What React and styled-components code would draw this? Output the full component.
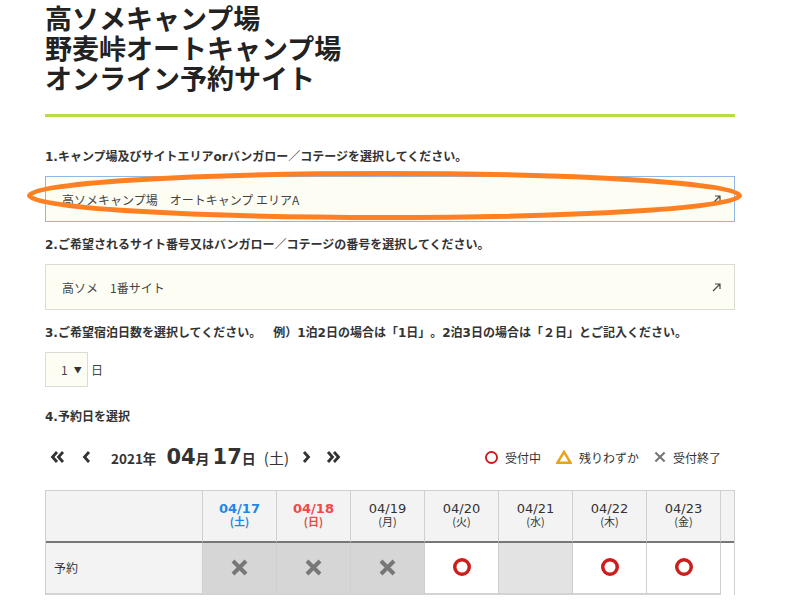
import React from 'react';
import styled, { createGlobalStyle } from 'styled-components';

const GlobalStyle = createGlobalStyle`
  body {
    margin: 0;
    background: #fff;
    color: #333;
    font-family: "DejaVu Sans", "Noto Sans CJK JP", sans-serif;
    text-spacing-trim: space-all;
  }
`;

const Page = styled.div`
  width: 690px;
  margin: 0 45px;
  padding-top: 3px;
`;

const Title = styled.h1`
  margin: 0;
  font-family: "Noto Sans CJK JP", sans-serif;
  font-size: 27px;
  line-height: 30px;
  font-weight: 700;
  color: #222;
`;

const Rule = styled.div`
  height: 3px;
  margin-top: 21px;
  background: #b6dc4e;
`;

const Label = styled.p`
  margin: ${p => p.top}px 0 10px;
  font-size: 12px;
  font-weight: 700;
  line-height: 18px;
  color: #333;
  white-space: nowrap;
`;

const SelectWrap = styled.div`
  position: relative;
`;

const SelectBox = styled.div`
  display: flex;
  align-items: center;
  justify-content: space-between;
  box-sizing: border-box;
  height: 46px;
  padding: 0 13px 0 16px;
  background: #fdfdf4;
  border: 1px solid ${p => (p.focused ? '#8fb8e6' : '#dcdcd6')};
  font-family: "Noto Sans CJK JP", sans-serif;
  font-size: 12px;
  color: #444;
`;

const Highlight = styled.svg`
  position: absolute;
  left: -19px;
  top: -6px;
  pointer-events: none;
`;

const NightsRow = styled.div`
  display: flex;
  align-items: center;
  gap: 3px;
  font-size: 12px;
  color: #444;
  font-family: "Noto Sans CJK JP", sans-serif;
`;

const SmallSelect = styled.div`
  display: flex;
  align-items: center;
  gap: 6px;
  box-sizing: border-box;
  width: 43px;
  height: 35px;
  padding-left: 15px;
  background: #fdfdf4;
  border: 1px solid #dcdcd6;
  font-size: 12px;
`;

const Caret = styled.span`
  font-size: 8px;
  color: #333;
`;

const Nav = styled.div`
  display: flex;
  align-items: center;
  justify-content: space-between;
  height: 32px;
  margin: 15px 0 17px;
  padding: 0 14px 0 5px;
`;

const DateNav = styled.div`
  display: flex;
  align-items: center;
`;

const ArrowBtn = styled.span`
  display: flex;
  align-items: center;
  margin-right: ${p => p.gap}px;
`;

const DateText = styled.div`
  display: flex;
  align-items: baseline;
  font-weight: 700;
  color: #333;
  margin-right: 13px;
`;

const Small = styled.span`
  font-size: ${p => p.size || 14}px;
  font-weight: ${p => p.weight || 700};
  margin-right: ${p => p.gap || 0}px;
  font-family: "Noto Sans CJK JP", sans-serif;
`;

const Big = styled.span`
  font-size: 21px;
  font-weight: 700;
  font-family: "DejaVu Sans", sans-serif;
`;

const Legend = styled.div`
  display: flex;
  align-items: center;
  gap: 15px;
  font-family: "Noto Sans CJK JP", sans-serif;
  font-size: 12px;
  color: #333;
`;

const LegendItem = styled.span`
  display: flex;
  align-items: center;
  gap: 7px;
`;

const TableWrap = styled.div`
  width: 690px;
  box-sizing: border-box;
  overflow: hidden;
  border: 1px solid #cfcfcf;
  border-bottom: none;
`;

const Grid = styled.div`
  display: grid;
  grid-template-columns: 157px repeat(7, 74px) 1fr;
`;

const HeadCell = styled.div`
  display: flex;
  flex-direction: column;
  align-items: center;
  justify-content: center;
  height: 52px;
  background: #f3f3f3;
  border-right: ${p => (p.last ? 'none' : '1px solid #cfcfcf')};
  border-bottom: 2px solid #777;
  color: ${p => p.color || '#333'};
  font-weight: ${p => (p.color ? 700 : 400)};
  line-height: 13px;
  padding-bottom: 3px;
  box-sizing: border-box;
`;

const DateLine = styled.span`
  font-size: 13px;
`;

const DayLine = styled.span`
  font-size: 11px;
  font-family: "Noto Sans CJK JP", sans-serif;
`;

const BodyCell = styled.div`
  display: flex;
  align-items: center;
  justify-content: ${p => (p.left ? 'flex-start' : 'center')};
  height: 52px;
  box-sizing: border-box;
  padding: 0 0 2px ${p => (p.left ? 8 : 0)}px;
  background: ${p => p.bg || '#fff'};
  border-right: ${p => (p.last ? 'none' : '1px solid #cfcfcf')};
  border-bottom: ${p => (p.last ? 'none' : '2px solid #d3d3d3')};
  font-family: "Noto Sans CJK JP", sans-serif;
  font-size: 12px;
  color: #333;
`;

const Cross = ({ size = 17, stroke = 4, color = '#777' }) => (
  <svg width={size} height={size} viewBox="0 0 17 17">
    <path d="M2 2L15 15M15 2L2 15" stroke={color} strokeWidth={stroke} />
  </svg>
);

const Circle = ({ size = 18, stroke = 3.5 }) => (
  <svg width={size} height={size} viewBox="0 0 18 18">
    <circle cx="9" cy="9" r={9 - stroke / 2} fill="none" stroke="#cc1d1d" strokeWidth={stroke} />
  </svg>
);

const Triangle = () => (
  <svg width="16" height="14" viewBox="0 0 16 14">
    <path d="M8 1.8L14.6 12.8H1.4Z" fill="none" stroke="#e9a318" strokeWidth="2.4" strokeLinejoin="miter" />
  </svg>
);

const Chevron = ({ dir = 'left', double }) => {
  const d = dir === 'left'
    ? (double ? 'M7 2L2.5 7L7 12M13 2L8.5 7L13 12' : 'M7 2L2.5 7L7 12')
    : (double ? 'M2 2L6.5 7L2 12M8 2L12.5 7L8 12' : 'M2 2L6.5 7L2 12');
  return (
    <svg width={double ? 15 : 9} height="14" viewBox={`0 0 ${double ? 15 : 9} 14`}>
      <path d={d} fill="none" stroke="#333" strokeWidth="2.8" />
    </svg>
  );
};

const OpenArrow = () => (
  <svg width="9" height="9" viewBox="0 0 9 9">
    <path d="M1 8L8 1M3 1H8V6" fill="none" stroke="#444" strokeWidth="1.2" />
  </svg>
);

const days = [
  { date: '04/17', day: '(土)', color: '#1e88e5', state: 'x' },
  { date: '04/18', day: '(日)', color: '#f04848', state: 'x' },
  { date: '04/19', day: '(月)', state: 'x' },
  { date: '04/20', day: '(火)', state: 'o' },
  { date: '04/21', day: '(水)', state: 'none' },
  { date: '04/22', day: '(木)', state: 'o' },
  { date: '04/23', day: '(金)', state: 'o' },
];

const cellBg = { x: '#d6d6d6', none: '#e3e3e3', o: '#fff' };

const App = () => (
  <Page>
    <GlobalStyle />
    <Title>
      高ソメキャンプ場<br />
      野麦峠オートキャンプ場<br />
      オンライン予約サイト
    </Title>
    <Rule />

    <Label top={31}>1.キャンプ場及びサイトエリアorバンガロー／コテージを選択してください。</Label>
    <SelectWrap>
      <SelectBox focused>
        <span>高ソメキャンプ場　オートキャンプ エリアA</span>
        <OpenArrow />
      </SelectBox>
      <Highlight width="730" height="56" viewBox="0 0 730 56">
        <ellipse cx="358.5" cy="25.5" rx="355" ry="22" fill="none" stroke="#ff8023" strokeWidth="5" />
      </Highlight>
    </SelectWrap>

    <Label top={14}>2.ご希望されるサイト番号又はバンガロー／コテージの番号を選択してください。</Label>
    <SelectBox>
      <span>高ソメ　1番サイト</span>
      <OpenArrow />
    </SelectBox>

    <Label top={14}>3.ご希望宿泊日数を選択してください。　例）1泊2日の場合は「1日」。2泊3日の場合は「２日」とご記入ください。</Label>
    <NightsRow>
      <SmallSelect>
        1 <Caret>▼</Caret>
      </SmallSelect>
      日
    </NightsRow>

    <Label top={21}>4.予約日を選択</Label>
    <Nav>
      <DateNav>
        <ArrowBtn gap={17}><Chevron dir="left" double /></ArrowBtn>
        <ArrowBtn gap={20}><Chevron dir="left" /></ArrowBtn>
        <DateText>
          <Small size={13.5} gap={10}>2021年</Small>
          <Big>04</Big>
          <Small gap={3}>月</Small>
          <Big>17</Big>
          <Small gap={8}>日</Small>
          <Small size={15} weight={400}>(土)</Small>
        </DateText>
        <ArrowBtn gap={15}><Chevron dir="right" /></ArrowBtn>
        <ArrowBtn gap={0}><Chevron dir="right" double /></ArrowBtn>
      </DateNav>
      <Legend>
        <LegendItem><Circle size={13} stroke={2.6} />受付中</LegendItem>
        <LegendItem><Triangle />残りわずか</LegendItem>
        <LegendItem><Cross size={12} stroke={3} />受付終了</LegendItem>
      </Legend>
    </Nav>

    <TableWrap>
      <Grid>
        <HeadCell />
        {days.map(d => (
          <HeadCell key={d.date} color={d.color}>
            <DateLine>{d.date}</DateLine>
            <DayLine>{d.day}</DayLine>
          </HeadCell>
        ))}
        <HeadCell last />

        <BodyCell left bg="#f3f3f3">予約</BodyCell>
        {days.map(d => (
          <BodyCell key={d.date} bg={cellBg[d.state]}>
            {d.state === 'x' && <Cross />}
            {d.state === 'o' && <Circle />}
          </BodyCell>
        ))}
        <BodyCell last />
      </Grid>
    </TableWrap>
  </Page>
);

export default App;
